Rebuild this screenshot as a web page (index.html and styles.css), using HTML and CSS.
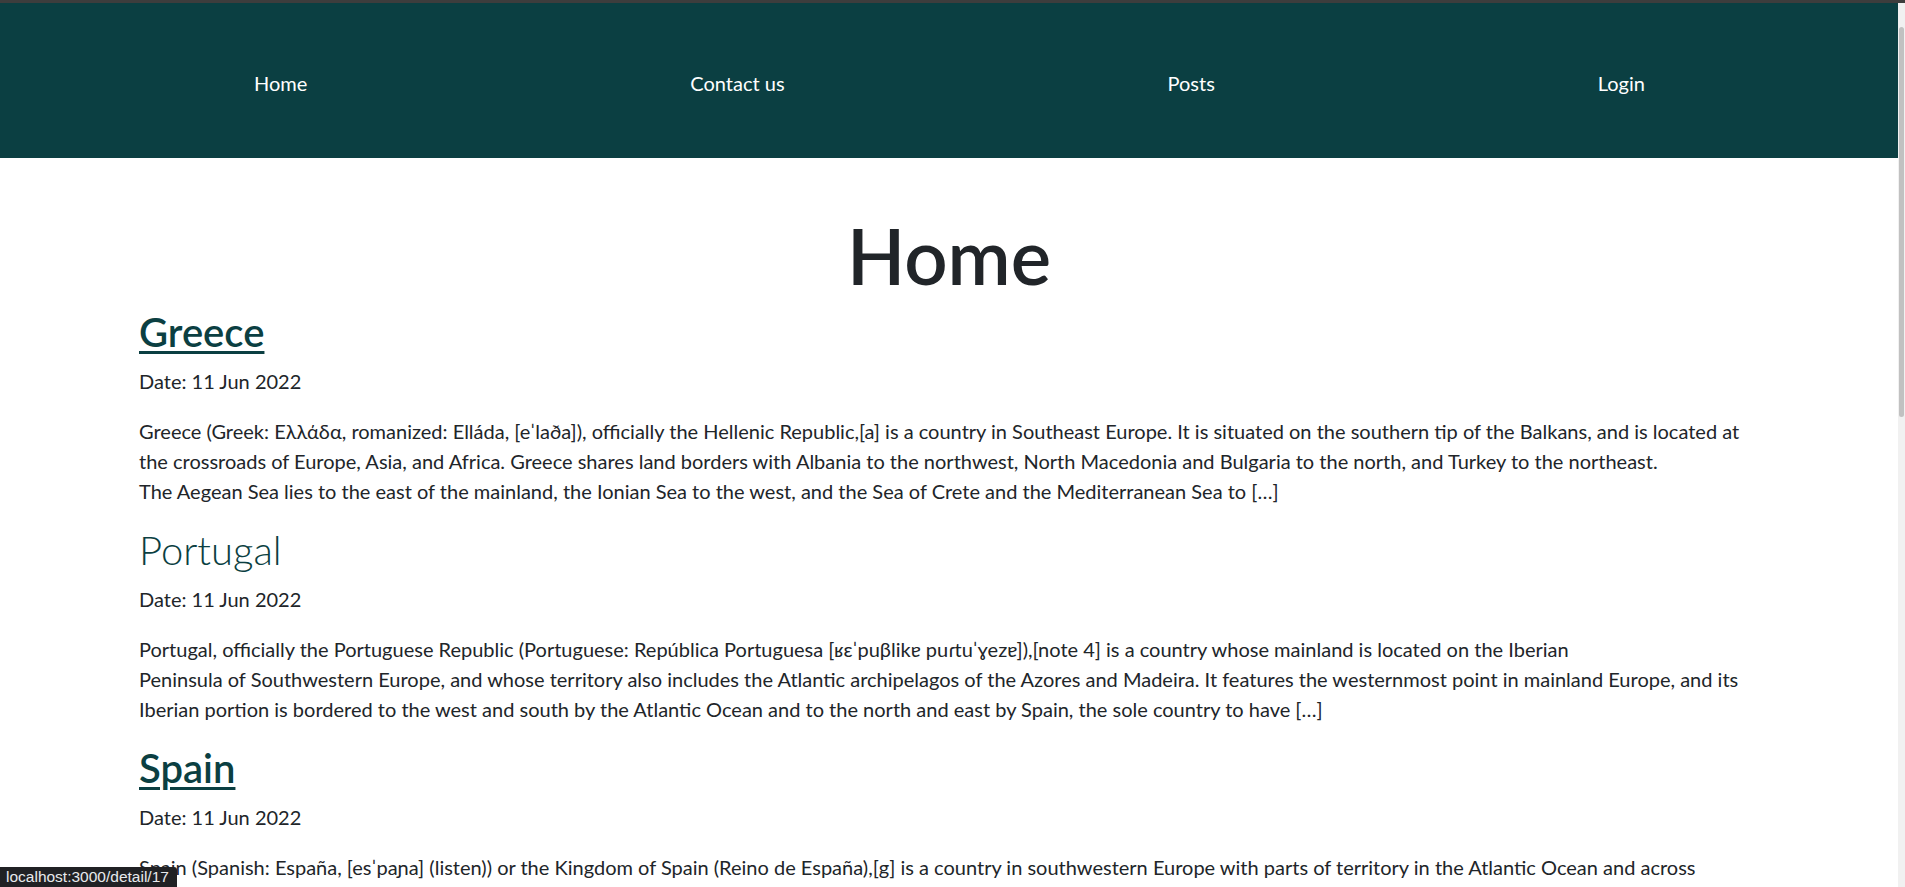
FILE: index.html
```html
<!DOCTYPE html>
<html lang="en">
<head>
<meta charset="utf-8">
<title>Home</title>
<link rel="stylesheet" href="styles.css">
</head>
<body>
<div class="topline"></div>
<div class="page">
  <nav class="nav">
    <a class="nav-link" href="#">Home</a>
    <a class="nav-link" href="#">Contact us</a>
    <a class="nav-link" href="#">Posts</a>
    <a class="nav-link" href="#">Login</a>
  </nav>
  <main class="container">
    <h1 class="title">Home</h1>
    <article class="post">
      <h2 class="post-title"><a class="post-link" href="#">Greece</a></h2>
      <p class="post-date">Date: 11 Jun 2022</p>
      <p class="post-excerpt">Greece (Greek: Ελλάδα, romanized: Elláda, [eˈlaða]), officially the Hellenic Republic,[a] is a country in Southeast Europe. It is situated on the southern tip of the Balkans, and is located at the crossroads of Europe, Asia, and Africa. Greece shares land borders with Albania to the northwest, North Macedonia and Bulgaria to the north, and Turkey to the northeast.<br>The Aegean Sea lies to the east of the mainland, the Ionian Sea to the west, and the Sea of Crete and the Mediterranean Sea to […]</p>
    </article>
    <article class="post">
      <h2 class="post-title"><a class="post-link is-hover" href="#">Portugal</a></h2>
      <p class="post-date">Date: 11 Jun 2022</p>
      <p class="post-excerpt">Portugal, officially the Portuguese Republic (Portuguese: República Portuguesa [ʁɛˈpuβlikɐ puɾtuˈɣezɐ]),[note 4] is a country whose mainland is located on the Iberian<br>Peninsula of Southwestern Europe, and whose territory also includes the Atlantic archipelagos of the Azores and Madeira. It features the westernmost point in mainland Europe, and its Iberian portion is bordered to the west and south by the Atlantic Ocean and to the north and east by Spain, the sole country to have […]</p>
    </article>
    <article class="post">
      <h2 class="post-title"><a class="post-link" href="#">Spain</a></h2>
      <p class="post-date">Date: 11 Jun 2022</p>
      <p class="post-excerpt">Spain (Spanish: España, [esˈpaɲa] (listen)) or the Kingdom of Spain (Reino de España),[g] is a country in southwestern Europe with parts of territory in the Atlantic Ocean and across<br>the Mediterranean Sea. The largest part of Spain is situated on the Iberian Peninsula; its territory also includes the Canary Islands in the Atlantic Ocean, the Balearic Islands in the Mediterranean Sea, and the autonomous cities of Ceuta and Melilla in Africa […]</p>
    </article>
  </main>
</div>
<div class="scrollbar"><div class="scrollbar-thumb"></div></div>
<div class="status">localhost:3000/detail/17</div>
</body>
</html>
```
FILE: styles.css
```css
html { overflow: hidden; }
body {
  margin: 0;
  background: #fff;
  color: #212529;
  font-family: "Lato", sans-serif;
  font-size: 20px;
  line-height: 30px;
}
.topline { height: 3px; background: #3d3d3d; }
.page { margin-right: 7px; }
.nav {
  height: 155px;
  background: #0b3f42;
  display: flex;
  justify-content: space-between;
  align-items: center;
  padding: 4px 253px 0 254px;
  box-sizing: border-box;
}
.nav-link { color: #fff; text-decoration: none; font-size: 20px; }
.container { max-width: 1620px; margin: 0 auto; padding: 0 15px; }
.title {
  text-align: center;
  font-size: 76px;
  font-weight: 600;
  line-height: 91px;
  margin: 52px 0 7px;
}
.post-title { font-size: 40px; font-weight: 600; line-height: 48px; margin: 0 0 10px; }
.post-link { color: #0b3f42; text-decoration: underline; text-decoration-thickness: 3px; text-underline-offset: 4px; }
.post-link.is-hover { font-weight: 300; text-decoration: none; }
.post-date { margin: 0 0 20px; }
.post-excerpt { margin: 0 0 20px; }
.scrollbar { position: fixed; top: 3px; right: 0; bottom: 0; width: 7px; background: #f1f1f1; }
.scrollbar-thumb { margin: 24px 1px 0; height: 390px; background: #c1c1c1; border-radius: 3px; }
.status {
  position: fixed; left: 0; bottom: 0;
  background: #202124; color: #e8eaed;
  font-family: "Liberation Sans", sans-serif; font-size: 15.5px; line-height: 20px;
  padding: 0 8px 0 6px; border-top-right-radius: 3px;
}
```
